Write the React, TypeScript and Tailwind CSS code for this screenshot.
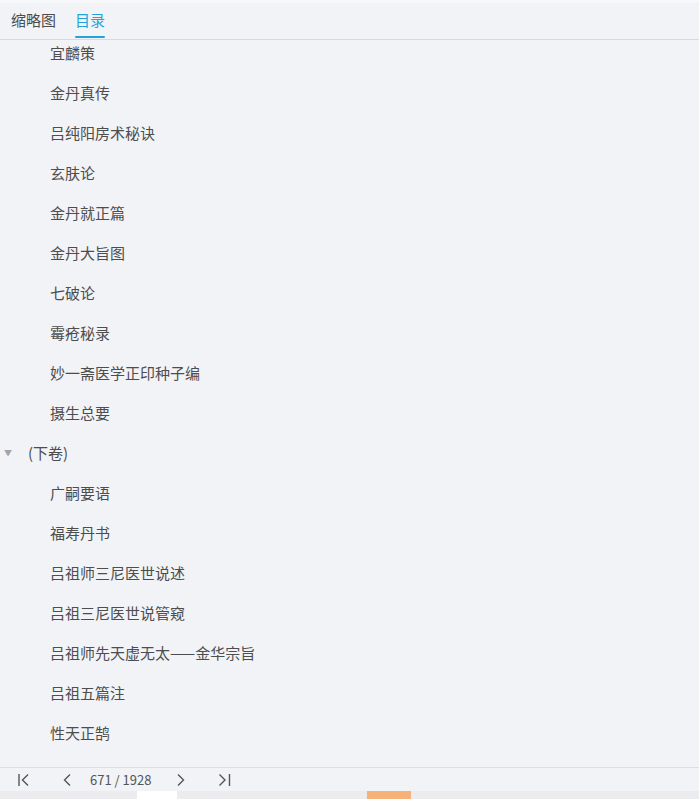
import React from "react";

const upper = [
  "宜麟策",
  "金丹真传",
  "吕纯阳房术秘诀",
  "玄肤论",
  "金丹就正篇",
  "金丹大旨图",
  "七破论",
  "霉疮秘录",
  "妙一斋医学正印种子编",
  "摄生总要",
];

const lower = [
  "广嗣要语",
  "福寿丹书",
  "吕祖师三尼医世说述",
  "吕祖三尼医世说管窥",
  "吕祖师先天虚无太——金华宗旨",
  "吕祖五篇注",
  "性天正鹄",
];

function Item({ label }: { label: string }) {
  return (
    <div className="h-10 flex items-center pl-[50px] text-[15px] text-[#4d4d4d]">
      {label}
    </div>
  );
}

export default function App() {
  return (
    <div
      className="w-[699px] h-[799px] bg-[#f2f3f7] flex flex-col overflow-hidden"
      style={{ fontFamily: '"Noto Sans CJK SC", "Noto Sans", sans-serif' }}
    >
      {/* TABS */}
      <div className="h-[3px] bg-[#f7f8fa]" />
      <div className="h-[37px] flex items-stretch gap-[19px] pl-[11px] border-b border-[#d8dae0] shrink-0">
        <div className="flex items-center text-[15px] text-[#4d4d4d] pb-[1px]">缩略图</div>
        <div className="relative flex items-center text-[15px] text-[#21a3da] pb-[1px]">
          目录
          <span className="absolute left-0 right-0 bottom-[1px] h-[2px] bg-[#21a3da] rounded" />
        </div>
      </div>

      {/* TOC */}
      <div className="flex-1 overflow-hidden">
        <div className="-mt-[7px]">
          {upper.map((t) => (
            <Item key={t} label={t} />
          ))}
          <div className="h-10 flex items-center text-[15px] text-[#4d4d4d]">
            <span className="w-[28px] pl-[4px] text-[8px] text-[#a0a4ab]">▼</span>
            (下卷)
          </div>
          {lower.map((t) => (
            <Item key={t} label={t} />
          ))}
        </div>
      </div>

      {/* PAGER */}
      <div className="h-[24px] border-t border-[#dcdee3] flex items-center text-[#555] shrink-0">
        <svg className="ml-[18px]" width="12" height="14" viewBox="0 0 12 14" fill="none" stroke="#555" strokeWidth="1.4">
          <path d="M1 1v12M10 1.5L4.5 7l5.5 5.5" />
        </svg>
        <svg className="ml-[32px]" width="10" height="14" viewBox="0 0 10 14" fill="none" stroke="#555" strokeWidth="1.4">
          <path d="M8 1.5L2.5 7 8 12.5" />
        </svg>
        <span className="ml-[18px] text-[13px]">671 / 1928</span>
        <svg className="ml-[25px]" width="10" height="14" viewBox="0 0 10 14" fill="none" stroke="#555" strokeWidth="1.4">
          <path d="M2 1.5L7.5 7 2 12.5" />
        </svg>
        <svg className="ml-[32px]" width="13" height="14" viewBox="0 0 13 14" fill="none" stroke="#555" strokeWidth="1.4">
          <path d="M1.5 1.5L7 7l-5.5 5.5M11.5 1v12" />
        </svg>
      </div>
      <div className="h-[8px] bg-[#ececee] flex shrink-0">
        <div className="w-[137px]" />
        <div className="w-[40px] bg-white" />
        <div className="w-[190px]" />
        <div className="w-[44px] bg-[#f6b179]" />
      </div>
    </div>
  );
}
